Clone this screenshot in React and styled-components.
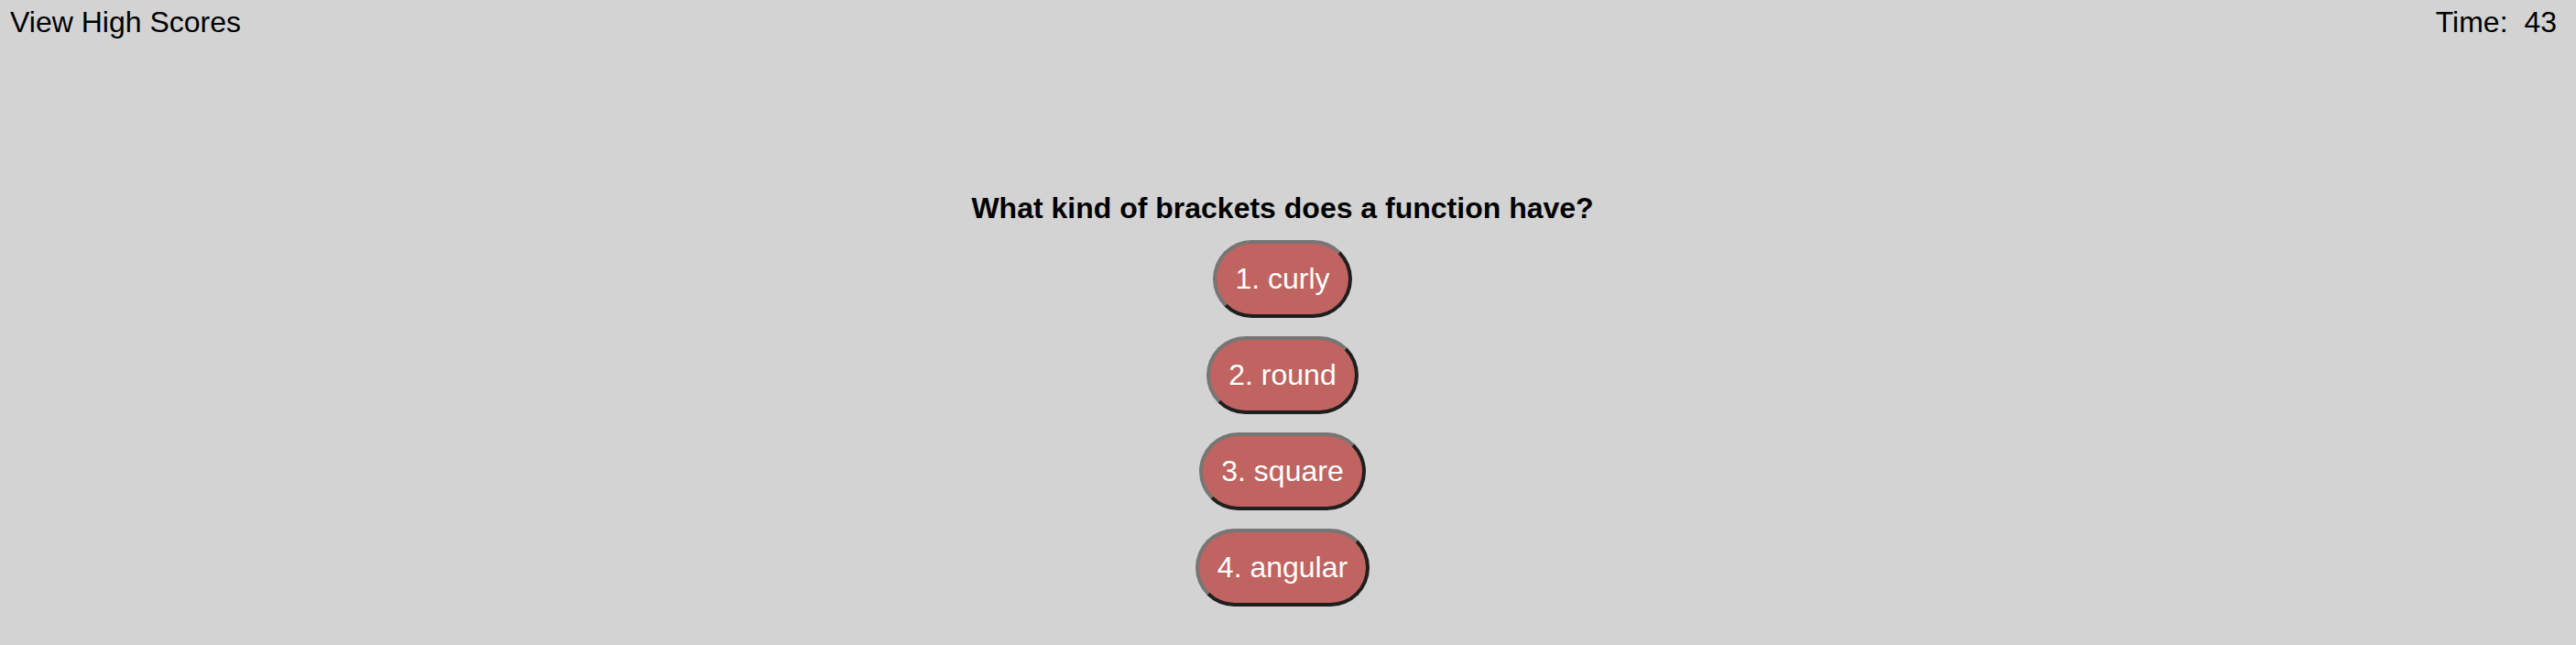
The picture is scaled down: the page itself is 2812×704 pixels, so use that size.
import React from 'react'
import styled, { createGlobalStyle } from 'styled-components'

const GlobalStyle = createGlobalStyle`
  html, body {
    margin: 0;
    padding: 0;
    background-color: #d3d3d3;
  }
  body {
    font-family: "Liberation Sans", Arial, Helvetica, sans-serif;
  }
`

const Page = styled.div`
  min-height: 704px;
  display: flex;
  flex-direction: column;
  background-color: #d3d3d3;
  color: #000;
`

const Header = styled.header`
  display: flex;
  justify-content: space-between;
  align-items: flex-start;
  padding: 6px 21px 0 11px;
  font-size: 32px;
`

const HighScores = styled.div`
  cursor: pointer;
`

const Timer = styled.div``

const TimeValue = styled.span`
  margin-left: 9px;
`

const Quiz = styled.main`
  display: flex;
  flex-direction: column;
  align-items: center;
  margin-top: 166px;
  padding-right: 12px;
`

const Question = styled.h2`
  margin: 0 0 16px;
  font-size: 32px;
  font-weight: 700;
`

const Answers = styled.div`
  display: flex;
  flex-direction: column;
  align-items: center;
  gap: 20px;
`

const AnswerButton = styled.button`
  font-family: "Liberation Sans", Arial, Helvetica, sans-serif;
  font-size: 32px;
  color: #fff;
  background-color: #bf6460;
  padding: 20px;
  border: 4px solid;
  border-color: #767676 #1f1f1f #1f1f1f #767676;
  border-radius: 50px;
  cursor: pointer;
`

const answers = ['1. curly', '2. round', '3. square', '4. angular']

const App = () => {
  return (
    <Page>
      <GlobalStyle />
      <Header>
        <HighScores>View High Scores</HighScores>
        <Timer>
          Time: <TimeValue>43</TimeValue>
        </Timer>
      </Header>
      <Quiz>
        <Question>What kind of brackets does a function have?</Question>
        <Answers>
          {answers.map((a) => (
            <AnswerButton key={a}>{a}</AnswerButton>
          ))}
        </Answers>
      </Quiz>
    </Page>
  )
}

export default App
